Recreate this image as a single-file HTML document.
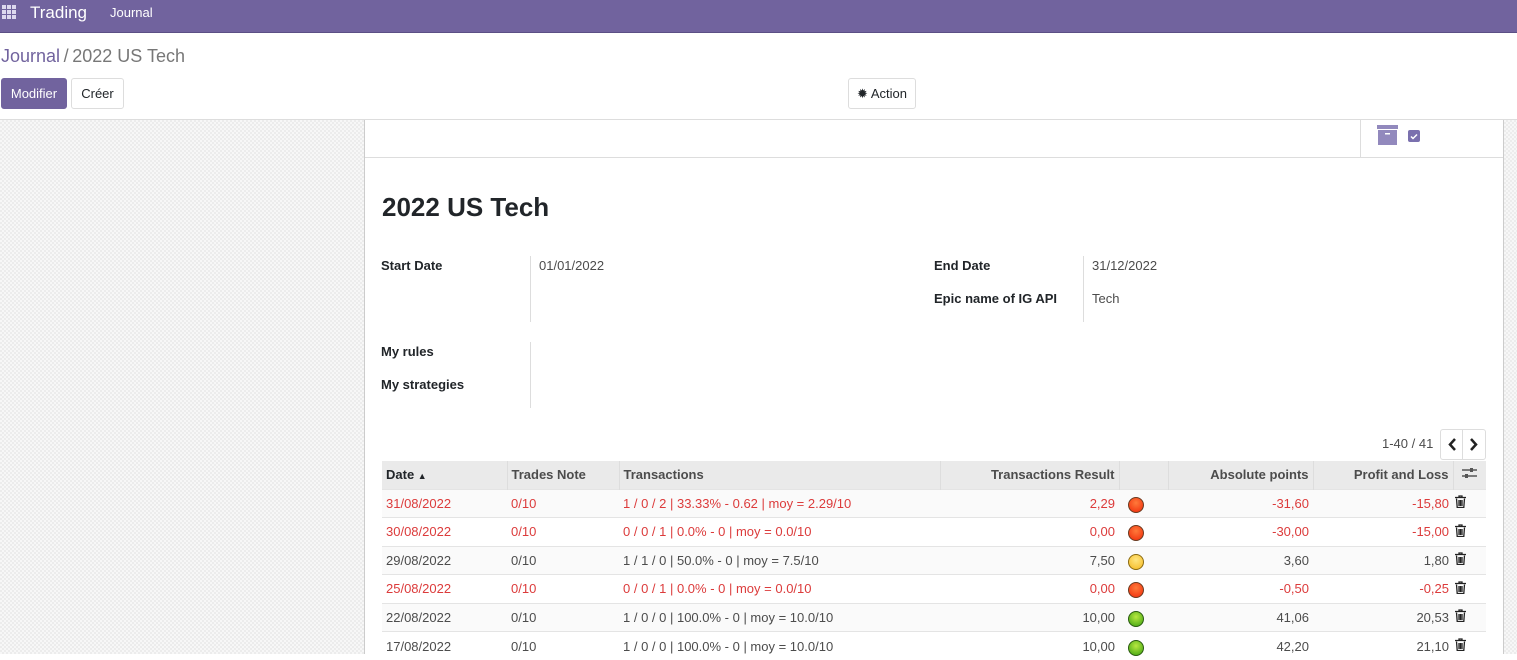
<!DOCTYPE html><html><head><meta charset="utf-8"><style>
*{box-sizing:border-box;margin:0;padding:0}
body{width:1517px;height:654px;overflow:hidden;font-family:"Liberation Sans",sans-serif;font-size:13px;color:#4c4c4c;background:#fff;position:relative}
.a{position:absolute}
.nav{left:0;top:0;width:1517px;height:33px;background:#71639e;border-bottom:1px solid #5b4f85}
.bg{top:120px;height:534px;background-color:#f7f7f7;background-image:linear-gradient(45deg,#ececec 25%,transparent 25%,transparent 75%,#ececec 75%),linear-gradient(45deg,#ececec 25%,transparent 25%,transparent 75%,#ececec 75%);background-size:4px 4px;background-position:0 0,2px 2px}
.btn{height:31px;border-radius:3px;font-size:13px;line-height:29px;text-align:center}
.lbl{font-weight:bold;color:#212529;font-size:13px}
table{border-collapse:collapse;position:absolute;left:382px;top:461px;width:1104px;font-size:13px}
th{background:#eaeaea;height:28px;font-weight:bold;color:#4c4c4c;border-left:1px solid #ddd;padding:0 4px;text-align:left}
td{height:28.5px;padding:0 4px;border-top:1px solid #e4e4e4}
tr.o td{background:#fafafa}
.r{color:#dc3b3b}
.n{text-align:right}
.dot{display:inline-block;width:16px;height:16px;border-radius:50%;border:1px solid #6a3a20;vertical-align:middle;margin-top:3px;margin-left:5px}
.red{background:radial-gradient(circle at 50% 35%,#ff7a3a,#f02a0a)}
.yel{background:radial-gradient(circle at 50% 35%,#ffe680,#f5b820);border-color:#8a6a10}
.grn{background:radial-gradient(circle at 50% 35%,#b8e840,#3aa010);border-color:#2a5a10}
.t{padding:0 0 0 2px}
</style></head><body>
<svg width="0" height="0" style="position:absolute"><defs><symbol id="tr" viewBox="0 0 11 13"><path d="M0 2.5h11M4 2.5V1h3v1.5M1.5 3.5l.7 9h6.6l.7-9M4 5v6M5.5 5v6M7 5v6" stroke="#222" stroke-width="1.3" fill="none"/></symbol></defs></svg>
<div class="a nav"></div>
<svg class="a" style="left:2px;top:5px" width="15" height="15"><g fill="#ddd8ee"><rect x="0" y="0" width="4" height="4"/><rect x="5" y="0" width="4" height="4"/><rect x="10" y="0" width="4" height="4"/><rect x="0" y="5" width="4" height="4"/><rect x="5" y="5" width="4" height="4"/><rect x="10" y="5" width="4" height="4"/><rect x="0" y="10" width="4" height="4"/><rect x="5" y="10" width="4" height="4"/><rect x="10" y="10" width="4" height="4"/></g></svg>
<div class="a" style="left:30px;top:3px;font-size:17px;color:#fff">Trading</div>
<div class="a" style="left:110px;top:5px;font-size:13px;color:#fff">Journal</div>
<div class="a" style="left:1px;top:46px;font-size:18px;color:#777"><span style="color:#71639e">Journal</span>&#8239;/&#8239;2022 US Tech</div>
<div class="a btn" style="left:1px;top:78px;width:66px;background:#71639e;color:#fff;border:1px solid #71639e">Modifier</div>
<div class="a btn" style="left:71px;top:78px;width:53px;border:1px solid #ddd;color:#212529">Créer</div>
<div class="a btn" style="left:848px;top:78px;width:68px;border:1px solid #ddd;color:#212529">✹ Action</div>
<div class="a" style="left:0;top:119px;width:1517px;border-top:1px solid #ddd"></div>
<div class="a bg" style="left:0;width:364px"></div>
<div class="a bg" style="left:1504px;width:13px"></div>
<div class="a" style="left:364px;top:120px;height:534px;border-left:1px solid #ccc;border-right:1px solid #ccc;width:1140px;background:#fff"></div>
<div class="a" style="left:365px;top:157px;width:1138px;border-top:1px solid #ddd"></div>
<div class="a" style="left:1360px;top:120px;height:37px;border-left:1px solid #ddd"></div>
<svg class="a" style="left:1377px;top:125px" width="21" height="20"><rect x="0" y="0" width="21" height="4" fill="#9289bd"/><rect x="1" y="5" width="19" height="15" fill="#9289bd"/><rect x="8" y="8" width="5" height="1.5" fill="#fff"/></svg>
<svg class="a" style="left:1408px;top:130px" width="12" height="12"><rect width="12" height="12" rx="2" fill="#7a70ae"/><path d="M3 6.5l2 2 4-4" stroke="#fff" stroke-width="1.5" fill="none"/></svg>
<div class="a" style="left:382px;top:192px;font-size:26px;font-weight:bold;color:#212529">2022 US Tech</div>
<div class="a lbl" style="left:381px;top:258px">Start Date</div>
<div class="a" style="left:530px;top:256px;height:66px;border-left:1px solid #ddd"></div>
<div class="a" style="left:539px;top:258px">01/01/2022</div>
<div class="a lbl" style="left:934px;top:258px">End Date</div>
<div class="a lbl" style="left:934px;top:291px">Epic name of IG API</div>
<div class="a" style="left:1083px;top:256px;height:66px;border-left:1px solid #ddd"></div>
<div class="a" style="left:1092px;top:258px">31/12/2022</div>
<div class="a" style="left:1092px;top:291px">Tech</div>
<div class="a lbl" style="left:381px;top:344px">My rules</div>
<div class="a lbl" style="left:381px;top:377px">My strategies</div>
<div class="a" style="left:530px;top:342px;height:66px;border-left:1px solid #ddd"></div>
<div class="a" style="left:1382px;top:436px">1-40 / 41</div>
<div class="a" style="left:1440px;top:429px;width:46px;height:31px;border:1px solid #ddd;border-radius:3px"></div>
<div class="a" style="left:1462px;top:429px;height:31px;border-left:1px solid #ddd"></div>
<svg class="a" style="left:1447px;top:438px" width="34" height="13"><path d="M8 1L3 6.5 8 12" stroke="#222" stroke-width="2.5" fill="none"/><path d="M24 1l5 5.5-5 5.5" stroke="#222" stroke-width="2.5" fill="none"/></svg>
<table>
<tr><th style="width:125px;border-left:none;color:#212529">Date <span style="font-size:9px">▲</span></th><th style="width:112px">Trades Note</th><th style="width:321px">Transactions</th><th class="n" style="width:179px;text-align:right">Transactions Result</th><th style="width:49px"></th><th style="width:145px;text-align:right">Absolute points</th><th style="width:140px;text-align:right">Profit and Loss</th><th style="text-align:center"><svg width="15" height="12"><path d="M0 3h15M0 9h15" stroke="#555" stroke-width="1.5"/><rect x="8" y="1" width="3" height="4" fill="#555"/><rect x="3" y="7" width="3" height="4" fill="#555"/></svg></th></tr>
<tr class="o r"><td>31/08/2022</td><td>0/10</td><td>1 / 0 / 2 | 33.33% - 0.62 | moy = 2.29/10</td><td class="n">2,29</td><td><span class="dot red"></span></td><td class="n">-31,60</td><td class="n">-15,80</td><td class="t"><svg width="11" height="13"><use href="#tr"/></svg></td></tr>
<tr class="r"><td>30/08/2022</td><td>0/10</td><td>0 / 0 / 1 | 0.0% - 0 | moy = 0.0/10</td><td class="n">0,00</td><td><span class="dot red"></span></td><td class="n">-30,00</td><td class="n">-15,00</td><td class="t"><svg width="11" height="13"><use href="#tr"/></svg></td></tr>
<tr class="o"><td>29/08/2022</td><td>0/10</td><td>1 / 1 / 0 | 50.0% - 0 | moy = 7.5/10</td><td class="n">7,50</td><td><span class="dot yel"></span></td><td class="n">3,60</td><td class="n">1,80</td><td class="t"><svg width="11" height="13"><use href="#tr"/></svg></td></tr>
<tr class="r"><td>25/08/2022</td><td>0/10</td><td>0 / 0 / 1 | 0.0% - 0 | moy = 0.0/10</td><td class="n">0,00</td><td><span class="dot red"></span></td><td class="n">-0,50</td><td class="n">-0,25</td><td class="t"><svg width="11" height="13"><use href="#tr"/></svg></td></tr>
<tr class="o"><td>22/08/2022</td><td>0/10</td><td>1 / 0 / 0 | 100.0% - 0 | moy = 10.0/10</td><td class="n">10,00</td><td><span class="dot grn"></span></td><td class="n">41,06</td><td class="n">20,53</td><td class="t"><svg width="11" height="13"><use href="#tr"/></svg></td></tr>
<tr><td>17/08/2022</td><td>0/10</td><td>1 / 0 / 0 | 100.0% - 0 | moy = 10.0/10</td><td class="n">10,00</td><td><span class="dot grn"></span></td><td class="n">42,20</td><td class="n">21,10</td><td class="t"><svg width="11" height="13"><use href="#tr"/></svg></td></tr>
</table>
</body></html>
